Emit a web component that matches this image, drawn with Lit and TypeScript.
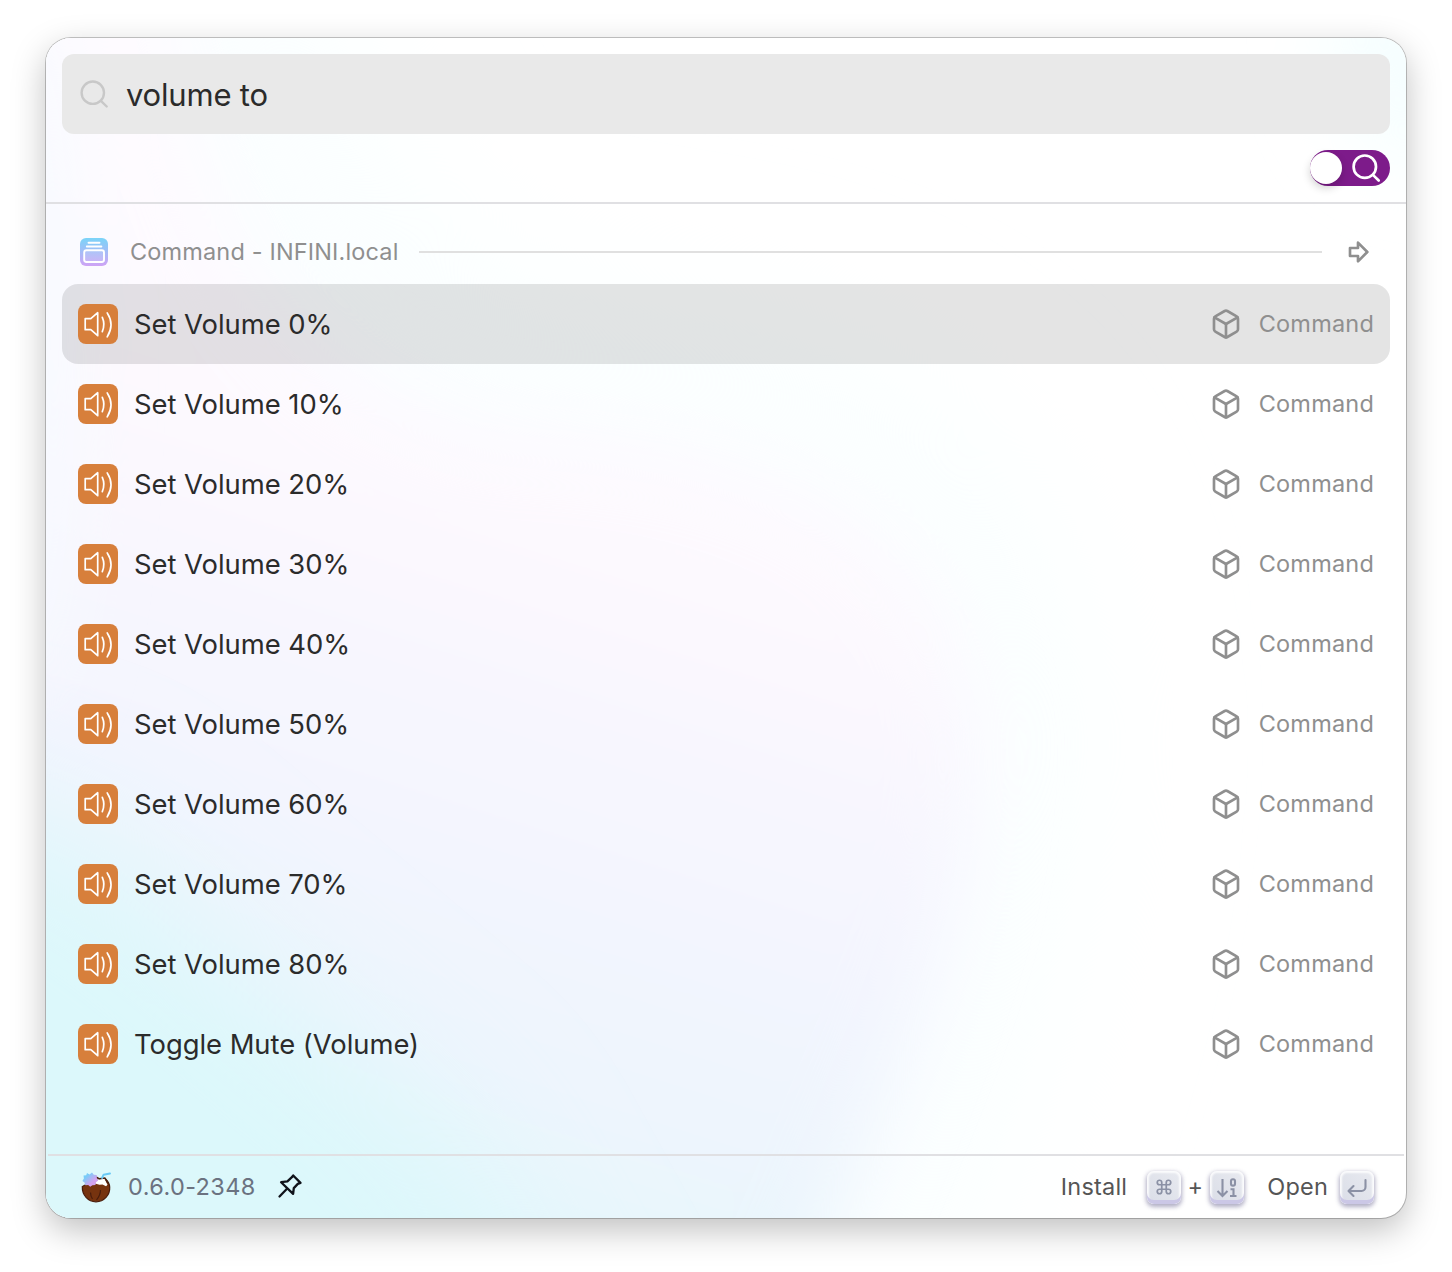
import { LitElement, html, css, svg } from "lit";
import { customElement, property, state } from "lit/decorators.js";
import { classMap } from "lit/directives/class-map.js";

const speaker = svg`<path d="M7.2 14.7h5.6l6.9-6v23l-6.9-6H7.2z M24.3 13.4q3.1 7 0 14.2 M29.2 8.9q7.6 11.6 0 24" fill="none" stroke="#fff" stroke-width="1.7" stroke-linecap="round" stroke-linejoin="round"/>`;

const search = svg`<circle cx="12.8" cy="12.7" r="11.2"/><path d="M20.9 20.9l5.8 5.6"/>`;

@customElement("result-row")
export class ResultRow extends LitElement {
  @property() label = "";
  @property({ type: Boolean }) selected = false;

  static styles = css`
    :host { display: block; }
    .row { display: flex; align-items: center; height: 80px; box-sizing: border-box; padding: 0 16px; border-radius: 16px; }
    .selected { background: rgba(0, 0, 0, 0.104); }
    .tile { width: 40px; height: 40px; border-radius: 8px; background: #d77f3b; flex: none; }
    .tile svg, .kind svg { display: block; }
    .label { flex: 1; margin-left: 16px; font-size: 27.4px; letter-spacing: -0.03px; color: #2b2b2b; }
    .kind { display: flex; align-items: center; gap: 17px; color: #8f8f8f; font-size: 23.5px; letter-spacing: 0.2px; }
    .kind-text { padding-bottom: 2px; }
  `;

  render() {
    return html`<div class=${classMap({ row: true, selected: this.selected })}>
      <div class="tile"><svg width="40" height="40" viewBox="0 0 40 40">${speaker}</svg></div>
      <span class="label">${this.label}</span>
      <div class="kind">
        <svg width="32" height="32" viewBox="0 0 24 24" fill="none" stroke="currentColor" stroke-width="2" stroke-linecap="round" stroke-linejoin="round">
          <path d="M21 8a2 2 0 0 0-1-1.73l-7-4a2 2 0 0 0-2 0l-7 4A2 2 0 0 0 3 8v8a2 2 0 0 0 1 1.73l7 4a2 2 0 0 0 2 0l7-4A2 2 0 0 0 21 16Z"/>
          <path d="m3.3 7 8.7 5 8.7-5"/><path d="M12 22V12"/>
        </svg>
        <span class="kind-text">Command</span>
      </div>
    </div>`;
  }
}

@customElement("key-cap")
export class KeyCap extends LitElement {
  static styles = css`
    :host { display: block; }
    .key {
      width: 34px; height: 33px; box-sizing: border-box; padding-bottom: 1px; border-radius: 7px;
      display: flex; align-items: center; justify-content: center; color: #8b91a5;
      background: linear-gradient(225deg, #e8eaf0, #dadde7);
      box-shadow: inset 0 -4px 0 #cbc7e6, inset 0 0 2px 2px rgba(255, 255, 255, 0.85), 0 2px 4px 1px rgba(60, 55, 110, 0.4);
    }
  `;
  render() {
    return html`<div class="key"><slot></slot></div>`;
  }
}

@customElement("app-root")
export class AppRoot extends LitElement {
  @state() private active = 0;
  private items = ["0%", "10%", "20%", "30%", "40%", "50%", "60%", "70%", "80%"].map((v) => `Set Volume ${v}`).concat("Toggle Mute (Volume)");

  static styles = css`
    :host { display: block; font-family: Inter, "Liberation Sans", sans-serif; background: #fff; }
    svg { display: block; }
    .desktop { box-sizing: border-box; width: 1452px; height: 1272px; padding: 38px 46px 54px; overflow: hidden; }
    .window {
      height: 1180px; border-radius: 25px; overflow: hidden; position: relative; background: #fff;
      box-shadow: 0 0 0 1px rgba(0, 0, 0, 0.22), 0 12px 34px rgba(0, 0, 0, 0.25);
    }
    .wash { position: absolute; inset: 0; }
    .content { position: relative; height: 100%; display: flex; flex-direction: column; }
    .searchbox { margin: 16px 16px 0; height: 80px; flex: none; border-radius: 12px; background: #e9e9e9; display: flex; align-items: center; padding: 0 18px; }
    .searchbox svg { color: #c8c8c8; }
    .query { margin-left: 17px; font-size: 31px; letter-spacing: -0.2px; color: #2b2b2b; }
    .tools { flex: none; height: 68px; padding: 16px 16px 0; box-sizing: border-box; display: flex; justify-content: flex-end; }
    .switch { width: 80px; height: 36px; border-radius: 18px; background: #7d1b8a; display: flex; align-items: center; color: #fff; }
    .knob { width: 32px; height: 32px; border-radius: 50%; background: #fff; box-shadow: 0 4px 8px rgba(0, 0, 0, 0.18); }
    .switch svg { margin-left: 10px; }
    .rule { height: 2px; flex: none; background: #e0e0e3; }
    .results { flex: 1; padding: 16px 16px 0; }
    .group { height: 64px; display: flex; align-items: center; padding: 0 16px 0 18px; color: #8f8f8f; }
    .group-name { margin-left: 22px; padding-bottom: 2px; font-size: 23.5px; letter-spacing: 0.15px; }
    .line { flex: 1; height: 2px; background: #e0e0e0; margin: 0 20px 0 20px; }
    .foot-rule { margin: 0 2px; }
    .footer { flex: none; height: 62px; display: flex; align-items: center; padding: 0 32px; font-size: 23.5px; letter-spacing: 0.2px; color: #555; }
    .version, .install, .plus, .open { padding-bottom: 2px; }
    .version { color: #6b7280; margin-left: 14px; flex: none; letter-spacing: 0.4px; }
    .pin { margin: 0 0 2px 20px; }
    .spacer { flex: 1; }
    .install { margin-right: 20px; }
    .plus { width: 28px; padding-right: 1px; text-align: center; letter-spacing: 0; }
    .open { margin: 0 12px 0 23px; }
  `;

  render() {
    return html`<div class="desktop"><div class="window">
      <svg class="wash" width="1360" height="1180" viewBox="0 0 1360 1180">
        <defs>
          <filter id="soft" filterUnits="userSpaceOnUse" x="-300" y="-300" width="2000" height="1800"><feGaussianBlur stdDeviation="38"/></filter>
          <filter id="wide" filterUnits="userSpaceOnUse" x="-400" y="-400" width="2200" height="2000"><feGaussianBlur stdDeviation="75"/></filter>
          <linearGradient id="tint" gradientUnits="userSpaceOnUse" x1="650" y1="250" x2="350" y2="1200">
            <stop offset="0" stop-color="#fefbff"/><stop offset=".27" stop-color="#fdf9fe"/><stop offset=".4" stop-color="#f9f7fe"/>
            <stop offset=".58" stop-color="#f4f5fe"/><stop offset=".8" stop-color="#eef5fd"/><stop offset="1" stop-color="#e4f6fc"/>
          </linearGradient>
        </defs>
        <path d="M-200-200H250C300 150 400 260 600 270C900 300 1040 450 1040 700C1030 950 960 1080 860 1400H-200z" fill="#fafeff" filter="url(#wide)"/>
        <path d="M-200-200H110C130 130 200 330 440 390C720 400 925 480 930 720C925 900 850 1030 700 1400H-200z" fill="url(#tint)" filter="url(#soft)"/>
        <path d="M-300 730L20 790C130 880 270 1000 400 1110L560 1400H-300z" fill="#dcf8fb" filter="url(#wide)"/>
        <ellipse cx="-20" cy="300" rx="50" ry="360" fill="#f7faff" filter="url(#soft)"/>
        <ellipse cx="1390" cy="0" rx="110" ry="130" fill="#f6feff" filter="url(#soft)"/>
      </svg>
      <div class="content">
      <div class="searchbox">
        <svg width="29" height="29" viewBox="0 0 29 29" fill="none" stroke="currentColor" stroke-width="2.4" stroke-linecap="round">${search}</svg>
        <span class="query">volume to</span>
      </div>
      <div class="tools"><div class="switch"><div class="knob"></div>
        <svg width="29" height="29" viewBox="0 0 29 29" fill="none" stroke="currentColor" stroke-width="2.7" stroke-linecap="round">${search}</svg>
      </div></div>
      <div class="rule"></div>
      <div class="results">
        <div class="group">
          <svg width="28" height="28" viewBox="0 0 28 28">
            <defs><linearGradient id="stack" x1="0" y1="0" x2="0" y2="1"><stop offset="0" stop-color="#7bd4f8"/><stop offset="1" stop-color="#cfa3f5"/></linearGradient></defs>
            <rect width="28" height="28" rx="6" fill="url(#stack)"/>
            <path d="M8.5 4.7h11M6.8 8.5h14.6" stroke="#fff" stroke-width="1.9" stroke-linecap="round"/>
            <rect x="4.2" y="12.2" width="19.8" height="11.8" rx="2.2" fill="#fff" fill-opacity=".12" stroke="#fff" stroke-width="1.9"/>
          </svg>
          <span class="group-name">Command - INFINI.local</span>
          <div class="line"></div>
          <svg width="32" height="32" viewBox="0 0 24 24" fill="none" stroke="currentColor" stroke-width="2" stroke-linecap="round" stroke-linejoin="round"><path d="M6 9h6V5l7 7-7 7v-4H6V9z"/></svg>
        </div>
        ${this.items.map((t, i) => html`<result-row .label=${t} .selected=${i === this.active} @click=${() => (this.active = i)}></result-row>`)}
      </div>
      <div class="rule foot-rule"></div>
      <div class="footer">
        <svg width="36" height="36" viewBox="0 0 36 36">
          <defs><linearGradient id="flower" x1="0" y1="0" x2="1" y2="1"><stop offset=".25" stop-color="#79cdf8"/><stop offset=".65" stop-color="#d3a2f0"/></linearGradient></defs>
          <path d="M4.3 17.5C4 26 10 32.8 18 32.8S32.2 26 31.7 18c-.2-3-1.7-5.6-4-7.7L18 10z" fill="#76330f" stroke="#4a1d0c" stroke-width="1.2"/>
          <path d="M17.5 10.5l9-.8 3 6-1.5 1.6-3.5-1.8-3 .3-4.5-1.3z" fill="#fff"/>
          <path d="M18 8l3.500 1.800 5.500-.8 2.800 5" fill="none" stroke="#4a2010" stroke-width="1.5" stroke-linejoin="round"/>
          <path d="M22.500 21c0 4.500-2 7.500-4 10M12.500 23.500c0 3 1 5 2 6.500" stroke="#4a1d0c" stroke-width="1.2" fill="none"/>
          <path d="M9 4l2.500 1.400L14 3.500l1.800 2.300 3 .2v3.200l1.400 2.300-2.200 1.800-.6 2.700-3 .2-2.200 1.600-2-1.800-2.900.3-.8-2.700L4.400 12l1.500-2.500L5.500 6.500l2.700-.3z" fill="url(#flower)"/>
          <path d="M24 9l1.600-3.300 6.400-1.200" stroke="#69c9f5" stroke-width="1.9" fill="none" stroke-linecap="round" stroke-linejoin="round"/>
        </svg>
        <span class="version">0.6.0-2348</span>
        <svg class="pin" width="28" height="28" viewBox="0 0 28 28" fill="none" stroke="#10131a" stroke-width="2.3" stroke-linecap="round" stroke-linejoin="round"><path d="M3.500 24.500l7-7.300M17.200 3.500l7.300 7.400-2.700 1-4 4.200-.7 5.800-12-11.700 6.300-.8 4.500-4.200z"/></svg>
        <div class="spacer"></div>
        <span class="install">Install</span>
        <key-cap><svg width="18" height="18" viewBox="0 0 24 24" fill="none" stroke="currentColor" stroke-width="2.3"><path d="M15 6v12a3 3 0 1 0 3-3H6a3 3 0 1 0 3 3V6a3 3 0 1 0-3 3h12a3 3 0 1 0-3-3"/></svg></key-cap>
        <span class="plus">+</span>
        <key-cap><svg width="24" height="24" viewBox="0 0 24 24" fill="none" stroke="currentColor" stroke-width="2.1"><path d="M2.500 16l5 5 5-5M7.500 21V4"/><rect x="16" y="4.200" width="4" height="6.400" rx="1.900"/><path d="M18.500 21v-6.800H15.500M15 21h6.500"/></svg></key-cap>
        <span class="open">Open</span>
        <key-cap><svg width="24" height="24" viewBox="0 0 24 24" fill="none" stroke="currentColor" stroke-width="2.1" stroke-linecap="round" stroke-linejoin="round"><path d="M8.500 11L3.500 16l5 5M20.500 5v7a4 4 0 0 1-4 4h-13"/></svg></key-cap>
      </div>
      </div>
    </div></div>`;
  }
}
